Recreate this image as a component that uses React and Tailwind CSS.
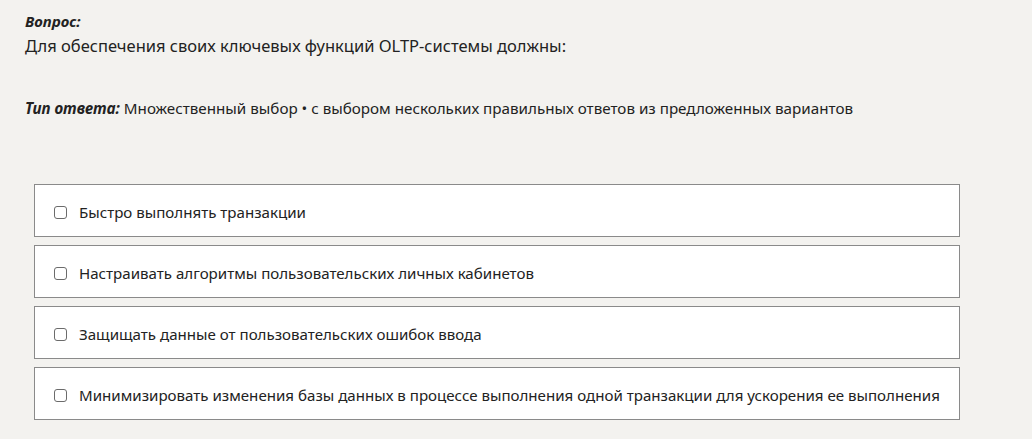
import React from 'react';

const options = [
  'Быстро выполнять транзакции',
  'Настраивать алгоритмы пользовательских личных кабинетов',
  'Защищать данные от пользовательских ошибок ввода',
  'Минимизировать изменения базы данных в процессе выполнения одной транзакции для ускорения ее выполнения',
];

export default function App() {
  return (
    <div className="min-h-[439px] w-[1032px] bg-[#f3f2ef] text-[#222] font-['Noto_Sans',sans-serif]">
      <div className="pl-[25px] pt-[11px]">
        <div className="text-[15px] font-bold italic leading-[20px]">Вопрос:</div>
        <div className="mt-[4px] text-[16.5px] leading-[22px]">
          Для обеспечения своих ключевых функций OLTP-системы должны:
        </div>
        <div className="mt-[40px] text-[15.2px] leading-[22px]">
          <span className="font-bold italic">Тип ответа:</span> Множественный выбор • с выбором нескольких правильных ответов из предложенных вариантов
        </div>
      </div>

      <div className="ml-[34px] mt-[65px] flex w-[926px] flex-col gap-[8px]">
        {options.map((text, i) => (
          <label
            key={i}
            className="flex h-[53px] items-center border border-[#8a8a8a] bg-white pl-[19px] pt-[3px]"
          >
            <span className="h-[13px] w-[13px] shrink-0 rounded-[3px] border border-[#6b6b6b] bg-white" />
            <span className="ml-[12px] text-[15.1px] text-[#222]">{text}</span>
          </label>
        ))}
      </div>
    </div>
  );
}
